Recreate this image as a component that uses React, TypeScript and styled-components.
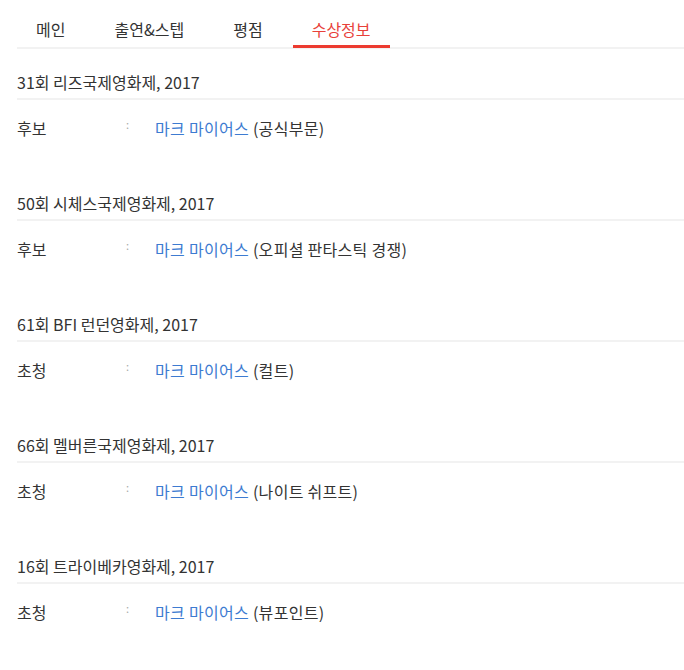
import React from "react";
import styled, { createGlobalStyle } from "styled-components";

const Global = createGlobalStyle`
  html, body { margin: 0; padding: 0; background: #fff; }
  body { font-family: "Noto Sans CJK KR", "Noto Sans", sans-serif; color: #333; }
`;

const Page = styled.div`
  padding-left: 17px;
`;

const Tabs = styled.ul`
  list-style: none;
  margin: 19px 0 0;
  padding: 0;
  display: flex;
  gap: 11px;
  border-bottom: 2px solid #f2f2f2;
`;

const Tab = styled.li<{ $active?: boolean }>`
  padding: 0 19px 6px;
  margin-bottom: -1px;
  font-size: 16px;
  line-height: 20px;
  color: ${(p) => (p.$active ? "#e8413a" : "#333")};
  border-bottom: 3px solid ${(p) => (p.$active ? "#ec3b30" : "transparent")};
`;

const Section = styled.section`
  padding-top: 23px;
  & + & {
    padding-top: 55px;
  }
`;

const Title = styled.h3`
  margin: 0;
  font-size: 16px;
  font-weight: normal;
  line-height: 20px;
  padding-bottom: 6px;
  border-bottom: 2px solid #f2f2f2;
  color: #333;
`;

const Row = styled.div`
  display: flex;
  margin-top: 18px;
  font-size: 16px;
  line-height: 20px;
`;

const Label = styled.span`
  width: 109px;
  flex: none;
`;

const Colon = styled.span`
  width: 29px;
  flex: none;
  font-size: 11px;
  line-height: 12px;
  color: #aaa;
`;

const Value = styled.span`
  color: #333;
  letter-spacing: 0.3px;
`;

const Link = styled.a`
  color: #3d7bd1;
  text-decoration: none;
`;

const awards = [
  { title: "31회 리즈국제영화제, 2017", label: "후보", film: "(공식부문)" },
  { title: "50회 시체스국제영화제, 2017", label: "후보", film: "(오피셜 판타스틱 경쟁)" },
  { title: "61회 BFI 런던영화제, 2017", label: "초청", film: "(컬트)" },
  { title: "66회 멜버른국제영화제, 2017", label: "초청", film: "(나이트 쉬프트)" },
  { title: "16회 트라이베카영화제, 2017", label: "초청", film: "(뷰포인트)" },
];

export default function App() {
  return (
    <>
      <Global />
      <Page>
        <Tabs>
          <Tab>메인</Tab>
          <Tab>출연&amp;스텝</Tab>
          <Tab>평점</Tab>
          <Tab $active>수상정보</Tab>
        </Tabs>
        {awards.map((a) => (
          <Section key={a.title}>
            <Title>{a.title}</Title>
            <Row>
              <Label>{a.label}</Label>
              <Colon>:</Colon>
              <Value>
                <Link href="#">마크 마이어스</Link> {a.film}
              </Value>
            </Row>
          </Section>
        ))}
      </Page>
    </>
  );
}
